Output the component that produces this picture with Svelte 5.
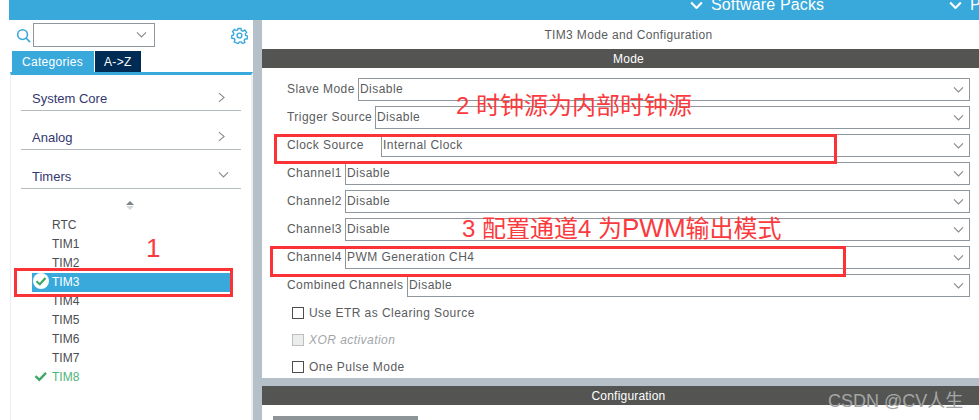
<script>
    const categories = [
        { name: 'System Core', open: false },
        { name: 'Analog', open: false },
        { name: 'Timers', open: true }
    ];

    const timers = [
        { name: 'RTC' },
        { name: 'TIM1' },
        { name: 'TIM2' },
        { name: 'TIM3', state: 'selected' },
        { name: 'TIM4' },
        { name: 'TIM5' },
        { name: 'TIM6' },
        { name: 'TIM7' },
        { name: 'TIM8', state: 'done' }
    ];

    // Label column width differs per row, the select takes what is left.
    const modes = [
        { label: 'Slave Mode', value: 'Disable', width: 71 },
        { label: 'Trigger Source', value: 'Disable', width: 88 },
        { label: 'Clock Source', value: 'Internal Clock', width: 94 },
        { label: 'Channel1', value: 'Disable', width: 58 },
        { label: 'Channel2', value: 'Disable', width: 58 },
        { label: 'Channel3', value: 'Disable', width: 58 },
        { label: 'Channel4', value: 'PWM Generation CH4', width: 58 },
        { label: 'Combined Channels', value: 'Disable', width: 120 }
    ];

    const checks = [
        { label: 'Use ETR as Clearing Source' },
        { label: 'XOR activation', disabled: true },
        { label: 'One Pulse Mode' }
    ];
</script>

{#snippet chevronDown(size, color, weight)}
    <svg class="chev" viewBox="0 0 12 8" width={size} height={size * 0.66} fill="none" stroke={color} stroke-width={weight} aria-hidden="true">
        <path d="M1 1.5 6 6.5 11 1.5" />
    </svg>
{/snippet}

<div class="page">
    <header class="topbar">
        <div class="pack first">
            {@render chevronDown(13, '#fff', 2)}
            <span>Software Packs</span>
        </div>
        <div class="pack second">
            {@render chevronDown(13, '#fff', 2)}
            <span>Pinout</span>
        </div>
    </header>

    <div class="body">
        <aside class="side">
            <div class="search">
                <svg viewBox="0 0 16 16" width="15" height="15" fill="none" stroke="#39a9dc" stroke-width="1.7" aria-hidden="true">
                    <circle cx="7" cy="7" r="5.2" />
                    <path d="M10.8 10.8 15 15" />
                </svg>
                <div class="combo">{@render chevronDown(11, '#888', 1.2)}</div>
                <svg class="gear" viewBox="0 0 24 24" width="17" height="17" fill="none" stroke="#39a9dc" stroke-width="2" aria-hidden="true">
                    <circle cx="12" cy="12" r="3.4" />
                    <path d="M10 2h4l.6 3 2.2 1 2.6-1.7 2.6 3-1.8 2.4.6 2.3 2.7 1-.6 3.6-3 .3-1.3 2 1 2.8-3.4 1.7-1.8-2.4h-2.4l-1.8 2.4L4.600 21l1-2.800-1.300-2-3-.3-.6-3.600 2.700-1 .6-2.300L2.200 6.300l2.600-3 2.600 1.700 2.200-1z" />
                </svg>
            </div>

            <div class="tabs">
                <span class="tab on">Categories</span>
                <span class="tab">A-&gt;Z</span>
            </div>

            <div class="tree">
                {#each categories as cat}
                    <div class="cat">
                        <span>{cat.name}</span>
                        {#if cat.open}
                            <span class="tip">{@render chevronDown(11, '#888', 1.2)}</span>
                        {:else}
                            <svg class="right" viewBox="0 0 8 12" width="7" height="11" fill="none" stroke="#888" stroke-width="1.2" aria-hidden="true">
                                <path d="M1 1 7 6 1 11" />
                            </svg>
                        {/if}
                    </div>
                {/each}

                <div class="sort">
                    <i class="up"></i>
                    <i class="down"></i>
                </div>

                <ul class="items">
                    {#each timers as t}
                        <li class={t.state}>
                            {#if t.state === 'selected'}
                                <svg class="mark" viewBox="0 0 16 16" width="16" height="16" aria-hidden="true">
                                    <circle cx="8" cy="8" r="8" fill="#fff" />
                                    <path d="M3.500 8.200 6.800 11.300 12.500 5" fill="none" stroke="#3fa866" stroke-width="2.200" />
                                </svg>
                            {:else if t.state === 'done'}
                                <svg class="mark" viewBox="0 0 16 16" width="16" height="16" aria-hidden="true">
                                    <path d="M2.500 8.200 6.300 11.800 13 4.800" fill="none" stroke="#3fa866" stroke-width="2.400" />
                                </svg>
                            {/if}
                            <span>{t.name}</span>
                        </li>
                    {/each}
                </ul>
            </div>
        </aside>

        <main class="panel">
            <h1>TIM3 Mode and Configuration</h1>
            <div class="bar">Mode</div>

            <div class="form">
                {#each modes as m}
                    <div class="row">
                        <span class="label" style:width="{m.width}px">{m.label}</span>
                        <div class="select">
                            <span>{m.value}</span>
                            {@render chevronDown(11, '#888', 1.2)}
                        </div>
                    </div>
                {/each}

                <div class="checks">
                    {#each checks as c}
                        <div class="check" class:disabled={c.disabled}>
                            <i class="box"></i>
                            <span>{c.label}</span>
                        </div>
                    {/each}
                </div>
            </div>

            <div class="gap"></div>
            <div class="bar">Configuration</div>
            <div class="config"><div class="config-tab"></div></div>
        </main>
    </div>

    <!-- red annotations drawn over the screenshot -->
    <div class="note-box" style="left:14px;top:268px;width:219px;height:29px"></div>
    <div class="note-box" style="left:274px;top:134px;width:563px;height:30px"></div>
    <div class="note-box" style="left:270px;top:246px;width:576px;height:31px"></div>
    <span class="note one">1</span>
    <span class="note two">2 时钟源为内部时钟源</span>
    <span class="note three">3 配置通道4 为<span class="latin">PWM</span>输出模式</span>
    <span class="mark-csdn">CSDN @CV人生</span>
</div>

<style>
    :global(body) {
        margin: 0;
        background: #fff;
    }
    .page {
        position: relative;
        width: 979px;
        height: 420px;
        overflow: hidden;
        font-family: 'Liberation Sans', Arial, sans-serif;
        font-size: 12px;
        color: #5a5c5e;
    }
    .topbar {
        height: 20px;
        margin-left: 9px;
        background: #39a9dc;
        color: #fff;
        font-size: 16px;
        position: relative;
        overflow: hidden;
    }
    .pack {
        position: absolute;
        top: -4px;
        display: flex;
        align-items: center;
        gap: 8px;
        letter-spacing: 0.15px;
        white-space: nowrap;
    }
    .pack.first {
        left: 681px;
    }
    .pack.second {
        left: 940px;
    }
    .body {
        display: flex;
        height: 400px;
    }
    .side {
        width: 253px;
        flex-shrink: 0;
        border-right: 9px solid #b5c0c8;
    }
    .search {
        display: flex;
        align-items: center;
        height: 26px;
        padding: 2px 0 0 16px;
    }
    .combo {
        width: 113px;
        height: 22px;
        margin-left: 2px;
        border: 1px solid #8f979c;
        display: flex;
        align-items: center;
        justify-content: flex-end;
        padding-right: 7px;
    }
    .gear {
        margin-left: 76px;
    }
    .tabs {
        display: flex;
        gap: 1px;
        height: 21px;
        margin: 3px 0 0 12px;
    }
    .tab {
        display: flex;
        align-items: center;
        padding: 0 9px;
        background: #002b54;
        color: #fff;
        letter-spacing: 0.3px;
    }
    .tab.on {
        background: #39a9dc;
        padding: 0 11px 0 10px;
    }
    .tree {
        margin-left: 10px;
        height: 345px;
        border-top: 3px solid #39a9dc;
        border-left: 1px solid #eceeef;
        border-right: 2px solid #eceeef;
        padding: 0 10px;
    }
    .cat {
        display: flex;
        align-items: flex-end;
        justify-content: space-between;
        height: 38px;
        padding: 0 12px 4px 11px;
        border-bottom: 1px solid #b5bcc0;
        box-sizing: border-box;
        margin-bottom: 1px;
        color: #32386e;
        font-size: 13px;
        line-height: 15px;
    }
    .cat:first-child {
        height: 36px;
    }
    .cat .right {
        margin: 0 4px 3px 0;
    }
    .cat .tip {
        margin-bottom: 3px;
    }
    .sort {
        display: flex;
        flex-direction: column;
        align-items: center;
        gap: 1px;
        margin: 12px 0 0 -2px;
        height: 8px;
    }
    .sort i {
        width: 0;
        height: 0;
        border-left: 4px solid transparent;
        border-right: 4px solid transparent;
    }
    .sort .up {
        border-bottom: 4px solid #7d8285;
    }
    .sort .down {
        border-top: 4px solid #d5d8da;
    }
    .items {
        list-style: none;
        margin: 7px 0 0;
        padding: 0 0 0 11px;
    }
    .items li {
        position: relative;
        height: 19px;
        width: 198px;
        padding-left: 20px;
        line-height: 18px;
        box-sizing: border-box;
        color: #4b4d50;
    }
    .items li.selected {
        background: #39a9dc;
        color: #fff;
    }
    .items li.done {
        color: #4fb578;
    }
    .mark {
        position: absolute;
        left: 1px;
        top: 0;
    }
    .panel {
        flex: 1;
        display: flex;
        flex-direction: column;
        min-width: 0;
    }
    h1 {
        margin: 0;
        height: 29px;
        line-height: 30px;
        padding-left: 16px;
        text-align: center;
        font-size: 12px;
        font-weight: 400;
        letter-spacing: 0.35px;
    }
    .bar {
        height: 19px;
        flex-shrink: 0;
        padding-left: 16px;
        line-height: 20px;
        text-align: center;
        letter-spacing: 0.2px;
        background: #545553;
        color: #fff;
    }
    .form {
        height: 310px;
        padding: 10px 9px 0 25px;
        box-sizing: border-box;
    }
    .row {
        display: flex;
        height: 23px;
        margin-bottom: 5px;
        line-height: 23px;
    }
    .label {
        flex-shrink: 0;
        white-space: nowrap;
        letter-spacing: 0.45px;
    }
    .select {
        flex: 1;
        display: flex;
        align-items: center;
        justify-content: space-between;
        padding: 0 5px 0 1px;
        border: 1px solid #8f979c;
        background: #fff;
        letter-spacing: 0.45px;
    }
    .checks {
        display: flex;
        flex-direction: column;
        margin-top: -3px;
    }
    .check {
        display: flex;
        align-items: center;
        gap: 5px;
        height: 27px;
        padding-left: 5px;
        letter-spacing: 0.45px;
    }
    .box {
        width: 10px;
        height: 10px;
        border: 1px solid #4b4d50;
    }
    .check.disabled {
        color: #a2a6a9;
        font-style: italic;
    }
    .check.disabled .box {
        background: #ebeded;
        border-color: #bcc0c3;
    }
    .gap {
        height: 8px;
        flex-shrink: 0;
        background: #b5c0c8;
    }
    .config {
        flex: 1;
        padding: 11px 0 0 11px;
    }
    .config-tab {
        width: 145px;
        height: 10px;
        background: #8e9599;
    }
    .note-box {
        position: absolute;
        box-sizing: border-box;
        border: 3px solid #fb3236;
    }
    .note {
        position: absolute;
        color: #fb3a3e;
        font-family: 'Liberation Sans', 'Noto Sans CJK SC', sans-serif;
        font-size: 24px;
        line-height: 1;
        white-space: nowrap;
    }
    .latin {
        font-size: 26px;
    }
    .one {
        left: 146px;
        top: 235px;
        font-size: 26px;
    }
    .two {
        left: 456px;
        top: 94px;
    }
    .three {
        left: 462px;
        top: 215px;
    }
    .mark-csdn {
        position: absolute;
        left: 828px;
        top: 390px;
        color: #a4a6a6;
        font-family: 'Liberation Sans', 'Noto Sans CJK SC', sans-serif;
        font-size: 18px;
        line-height: 22px;
        white-space: nowrap;
    }
</style>
